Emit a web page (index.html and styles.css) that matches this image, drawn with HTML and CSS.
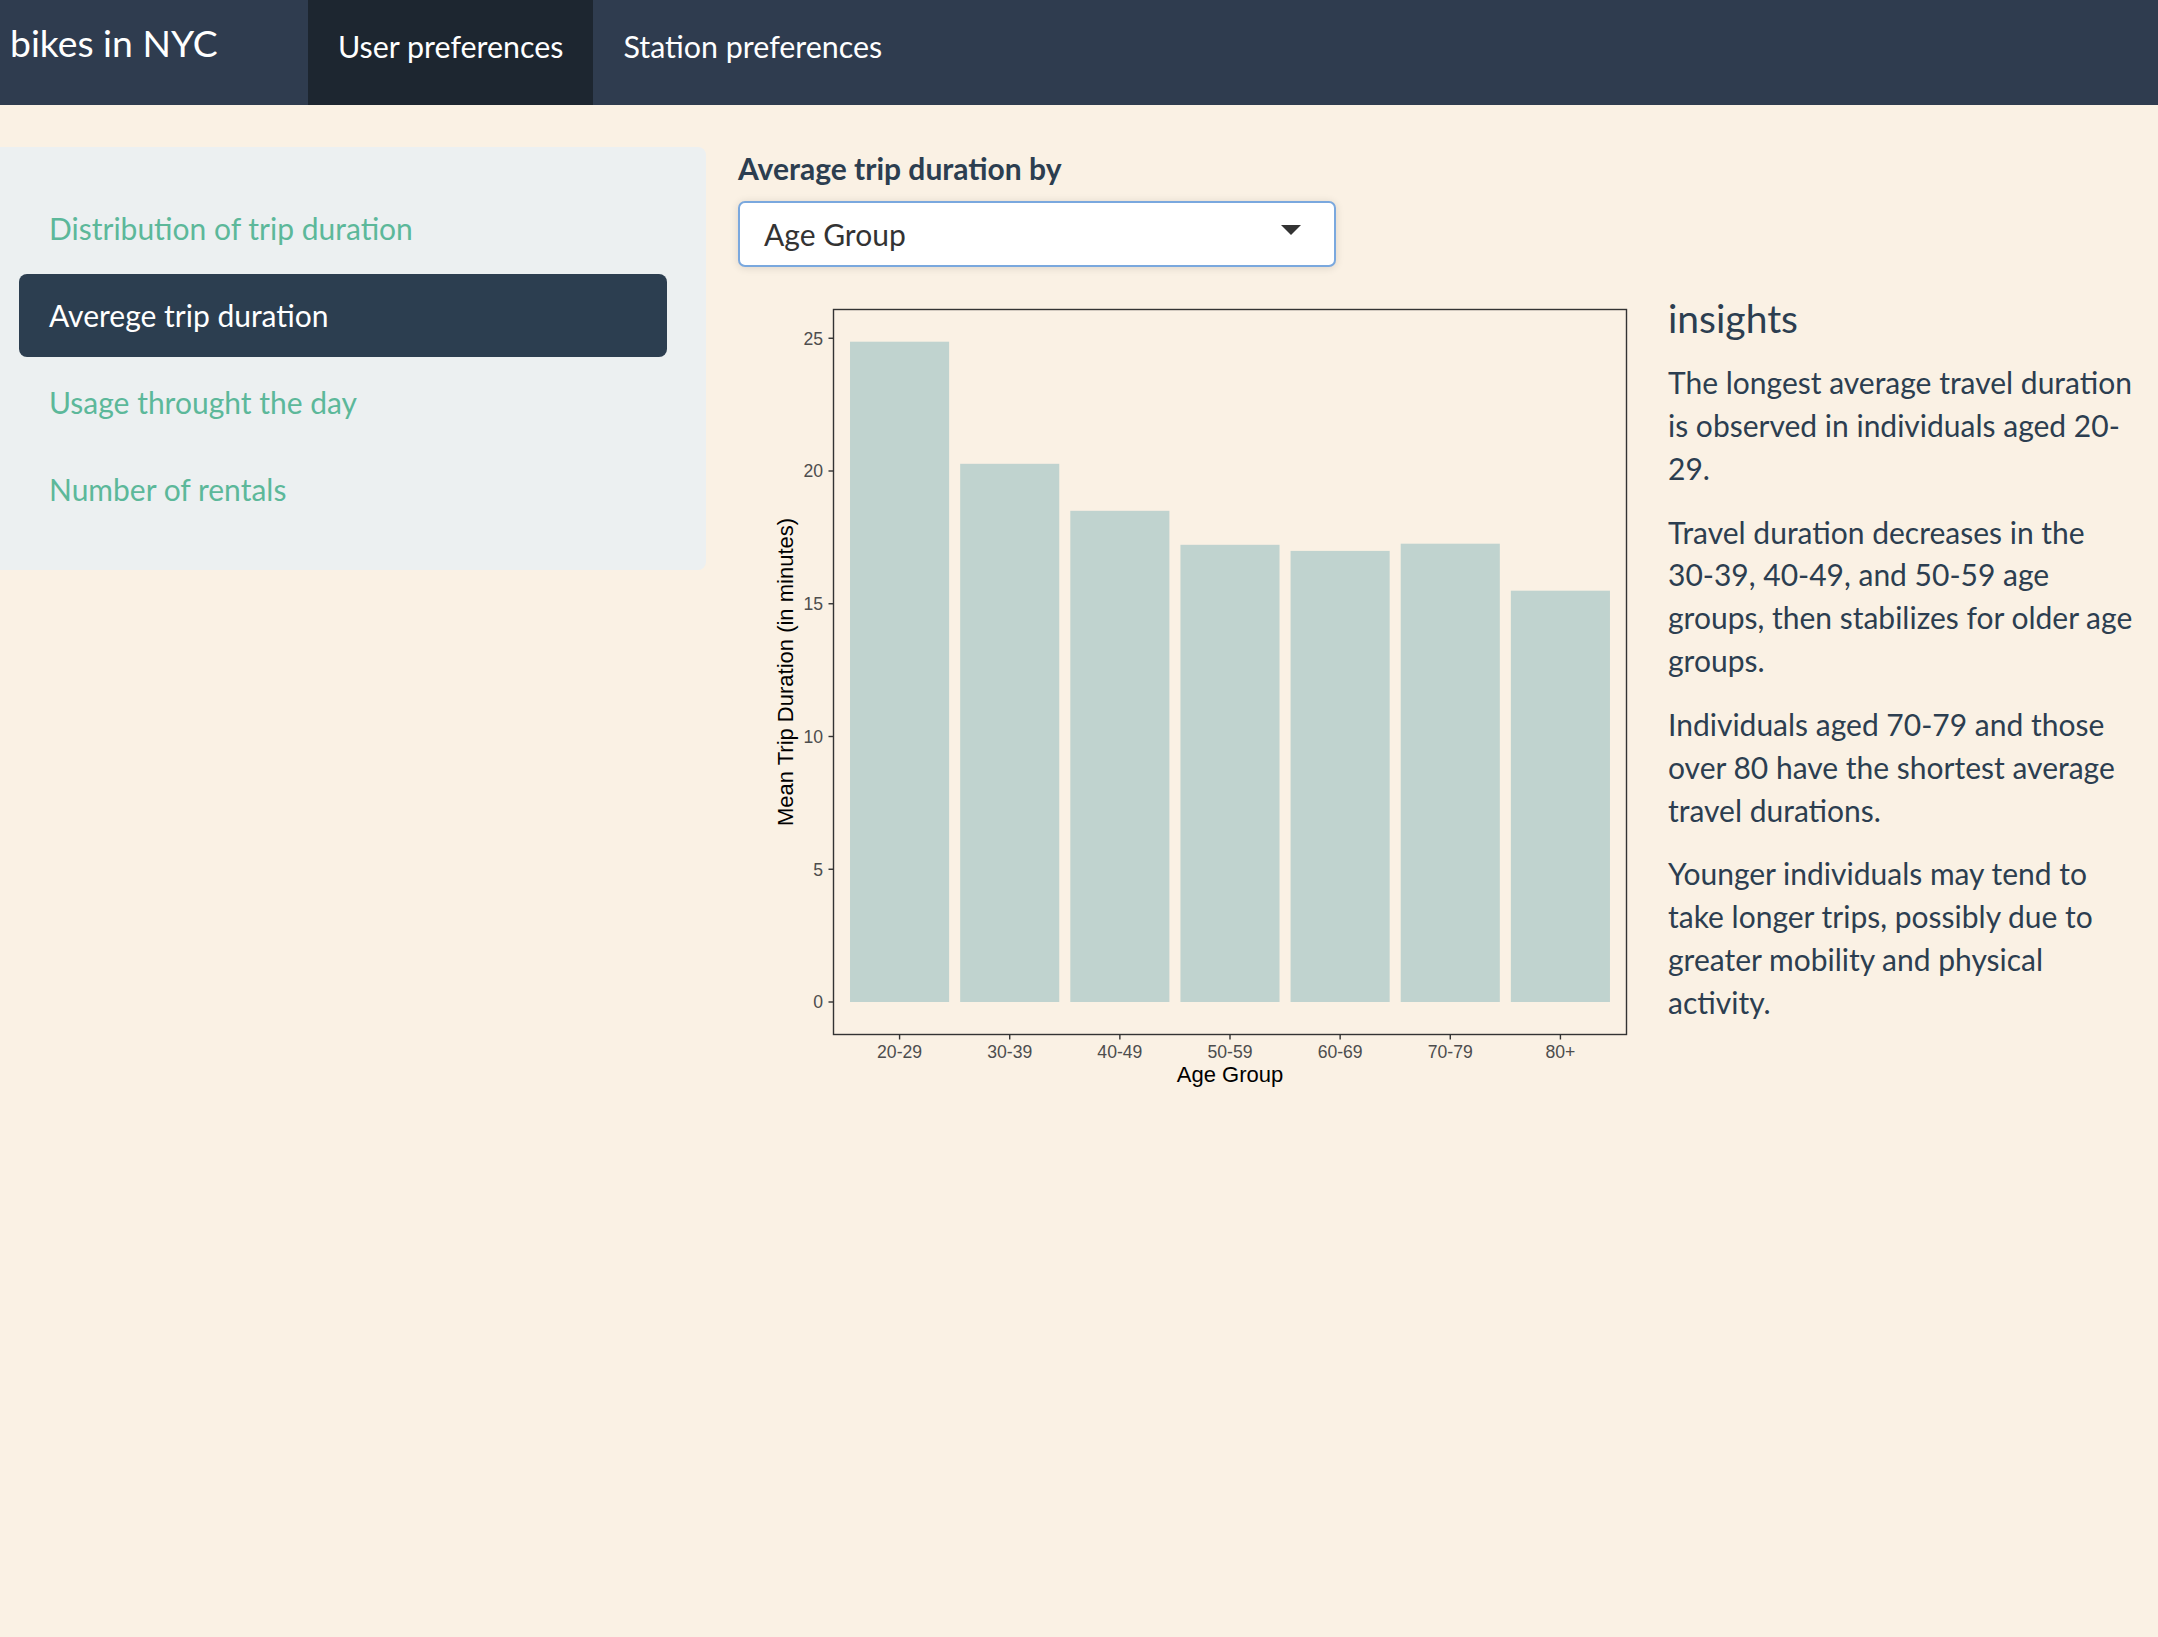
FILE: index.html
```html
<!DOCTYPE html>
<html lang="en">
<head>
<meta charset="utf-8">
<title>bikes in NYC</title>
<link rel="stylesheet" href="styles.css">
</head>
<body>
<nav class="navbar">
  <div class="brand">bikes in NYC</div>
  <ul class="tabs">
    <li class="tab active">User preferences</li>
    <li class="tab">Station preferences</li>
  </ul>
</nav>
<div class="page">
  <aside class="well">
    <ul class="pills">
      <li class="pill">Distribution of trip duration</li>
      <li class="pill active">Averege trip duration</li>
      <li class="pill">Usage throught the day</li>
      <li class="pill">Number of rentals</li>
    </ul>
  </aside>
  <main class="main">
    <label class="control-label">Average trip duration by</label>
    <div class="select">
      <span class="select-value">Age Group</span>
      <svg class="caret" width="20" height="10" viewBox="0 0 20 10"><path d="M0 0 L20 0 L10 10 Z" fill="#333"/></svg>
    </div>
    <div class="content-row">
      <svg class="plot" width="900" height="800" viewBox="0 0 900 800">
        <g fill="#c0d3cf">
          <rect x="112.02" y="44.7" width="99.1" height="660.3"/>
          <rect x="222.16" y="166.8" width="99.1" height="538.2"/>
          <rect x="332.3" y="213.8" width="99.1" height="491.2"/>
          <rect x="442.44" y="247.8" width="99.1" height="457.2"/>
          <rect x="552.58" y="253.9" width="99.1" height="451.1"/>
          <rect x="662.72" y="246.7" width="99.1" height="458.3"/>
          <rect x="772.86" y="293.7" width="99.1" height="411.3"/>
        </g>
        <rect x="95.5" y="12.5" width="793" height="725" fill="none" stroke="#333" stroke-width="1.4"/>
        <g stroke="#333" stroke-width="1.4">
          <line x1="90.5" y1="705" x2="95.5" y2="705"/>
          <line x1="90.5" y1="572.25" x2="95.5" y2="572.25"/>
          <line x1="90.5" y1="439.5" x2="95.5" y2="439.5"/>
          <line x1="90.5" y1="306.75" x2="95.5" y2="306.75"/>
          <line x1="90.5" y1="174" x2="95.5" y2="174"/>
          <line x1="90.5" y1="41.25" x2="95.5" y2="41.25"/>
          <line x1="161.58" y1="737.5" x2="161.58" y2="742.5"/>
          <line x1="271.72" y1="737.5" x2="271.72" y2="742.5"/>
          <line x1="381.86" y1="737.5" x2="381.86" y2="742.5"/>
          <line x1="492" y1="737.5" x2="492" y2="742.5"/>
          <line x1="602.14" y1="737.5" x2="602.14" y2="742.5"/>
          <line x1="712.28" y1="737.5" x2="712.28" y2="742.5"/>
          <line x1="822.42" y1="737.5" x2="822.42" y2="742.5"/>
        </g>
        <g class="tick-label" text-anchor="end">
          <text x="85" y="711.3">0</text>
          <text x="85" y="578.5">5</text>
          <text x="85" y="445.8">10</text>
          <text x="85" y="313">15</text>
          <text x="85" y="180.3">20</text>
          <text x="85" y="47.5">25</text>
        </g>
        <g class="tick-label" text-anchor="middle">
          <text x="161.58" y="761">20-29</text>
          <text x="271.72" y="761">30-39</text>
          <text x="381.86" y="761">40-49</text>
          <text x="492" y="761">50-59</text>
          <text x="602.14" y="761">60-69</text>
          <text x="712.28" y="761">70-79</text>
          <text x="822.42" y="761">80+</text>
        </g>
        <text class="axis-title" x="492" y="784.5" text-anchor="middle">Age Group</text>
        <text class="axis-title" x="0" y="0" text-anchor="middle" transform="translate(55 375) rotate(-90)">Mean Trip Duration (in minutes)</text>
      </svg>
      <section class="insights">
        <h4 class="insights-title">insights</h4>
        <p>The longest average travel duration is observed in individuals aged 20-29.</p>
        <p>Travel duration decreases in the 30-39, 40-49, and 50-59 age groups, then stabilizes for older age groups.</p>
        <p>Individuals aged 70-79 and those over 80 have the shortest average travel durations.</p>
        <p>Younger individuals may tend to take longer trips, possibly due to greater mobility and physical activity.</p>
      </section>
    </div>
  </main>
</div>
</body>
</html>
```

FILE: styles.css
```css
* { box-sizing: border-box; }

body {
  margin: 0;
  background: #faf1e4;
  color: #2c3e50;
  font-family: Lato, "Open Sans", "Liberation Sans", sans-serif;
  font-size: 30px;
  line-height: 1.42857;
}

.navbar {
  display: flex;
  height: 105px;
  background: #2f3c4f;
  color: #fff;
}

.brand {
  width: 308px;
  padding: 21px 0 0 10px;
  font-size: 37.3px;
  line-height: 44px;
  color: #fff;
}

.tabs {
  display: flex;
  margin: 0;
  padding: 0;
  list-style: none;
}

.tab {
  padding: 24.5px 30px 0;
  height: 105px;
  line-height: 43px;
  font-size: 30.4px;
  color: #fff;
}

.tab.active {
  background: #1d2630;
}

.page {
  display: flex;
  align-items: flex-start;
  padding-top: 42px;
}

.well {
  width: 706px;
  flex: none;
  background: #ecf0f1;
  border-radius: 0 8px 8px 0;
  padding: 40px 39px 39px 19px;
}

.pills {
  display: flex;
  flex-direction: column;
  gap: 4px;
  margin: 0;
  padding: 0;
  list-style: none;
}

.pill {
  height: 83px;
  line-height: 83px;
  padding: 0 30px;
  color: #5cb89a;
  border-radius: 8px;
}

.pill.active {
  background: #2c3e50;
  color: #fff;
}

.main {
  margin-left: 32px;
  display: flex;
  flex-direction: column;
  align-items: flex-start;
}

.control-label {
  font-weight: 700;
  line-height: 43px;
  margin-bottom: 11px;
}

.select {
  width: 598px;
  height: 66px;
  background: #fff;
  border: 2px solid #7aa8de;
  border-radius: 7px;
  box-shadow: 0 1px 8px rgba(0, 0, 0, 0.12);
  display: flex;
  align-items: center;
  justify-content: space-between;
  padding: 0 33px 0 24px;
  color: #333;
}

.select-value {
  line-height: 43px;
}

.caret {
  display: block;
  margin-top: -8px;
}

.content-row {
  display: flex;
  align-items: flex-start;
  margin-top: 30px;
}

.plot {
  display: block;
  flex: none;
}

.tick-label {
  font-family: "Liberation Sans", Arial, sans-serif;
  font-size: 17.6px;
  fill: #4d4d4d;
}

.axis-title {
  font-family: "Liberation Sans", Arial, sans-serif;
  font-size: 22px;
  fill: #000;
}

.insights {
  width: 467px;
  margin-left: 30px;
}

.insights-title {
  font-size: 39px;
  font-weight: 400;
  line-height: 43px;
  margin: 0 0 21px;
}

.insights p {
  margin: 0 0 21px;
}
```
